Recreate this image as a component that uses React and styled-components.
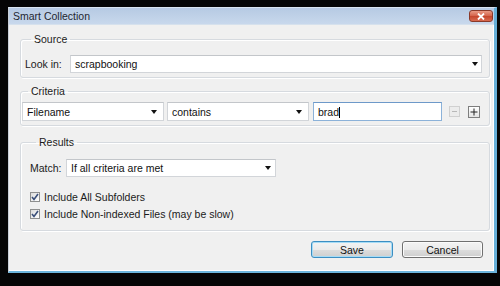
import React from 'react';
import styled, { createGlobalStyle } from 'styled-components';

const Global = createGlobalStyle`
  html, body { margin: 0; padding: 0; background: #050505; }
  body { width: 500px; height: 286px; overflow: hidden; font-family: "Liberation Sans", Arial, sans-serif; font-size: 10px; color: #1b1b1b; }
  * { box-sizing: border-box; }
`;

const Stage = styled.div`
  width: 500px;
  height: 286px;
  padding: 7px 3px 13px 8px;
  display: flex;
`;

const Window = styled.div`
  flex: 1;
  display: flex;
  flex-direction: column;
  background: #f0f0f0;
  border-left: 1px solid #c9d0d8;
  border-top: 1px solid #d9e4f0;
  border-right: 3px solid #66afd8;
  border-bottom: 2px solid #6cb5dc;
  box-shadow: inset -1px -1px 0 #ffffff;
`;

const TitleBar = styled.div`
  height: 17px;
  display: flex;
  align-items: flex-start;
  justify-content: space-between;
  padding: 0 1px 0 4px;
  background: linear-gradient(#b6cae3, #c8d8ec);
  border-bottom: 1px solid #d6e1ed;
`;

const Title = styled.span`
  line-height: 17px;
  font-size: 10.5px;
  color: #1e2630;
`;

const CloseButton = styled.div`
  margin-top: 2px;
  width: 24px;
  height: 12px;
  border-radius: 3px;
  border: 1px solid #8a3a2a;
  background: linear-gradient(#e99b85, #d4624a 50%, #c4452c 51%, #d86a50);
  display: flex;
  align-items: center;
  justify-content: center;
`;

const Body = styled.div`
  flex: 1;
  display: flex;
  flex-direction: column;
  padding: 8px 4px 0 11px;
`;

const Group = styled.fieldset`
  margin: ${p => p.$mt || 0}px 0 0 0;
  padding: ${p => p.$pad};
  border: 1px solid #d6dadf;
  border-radius: 3px;
  box-shadow: inset 1px 1px 0 #ffffff, 1px 1px 0 #ffffff;
  min-width: 0;
`;

const Legend = styled.legend`
  margin-left: 6px;
  padding: 0 3px;
  line-height: 12px;
  font-size: 10.5px;
  color: #1b1b1b;
`;

const Row = styled.div`
  display: flex;
  align-items: center;
`;

const Label = styled.span`
  width: ${p => p.$w}px;
  flex: none;
  font-size: 10.5px;
`;

const Field = styled.div`
  width: ${p => (p.$w ? `${p.$w}px` : 'auto')};
  flex: ${p => (p.$w ? 'none' : '1')};
  height: ${p => p.$h || 18}px;
  margin-left: ${p => p.$ml || 0}px;
  background: #ffffff;
  border: 1px solid ${p => (p.$focus ? '#8cb2d9' : '#d2d5d9')};
  border-top-color: ${p => (p.$focus ? '#6d99c9' : '#c3c6ca')};
  display: flex;
  align-items: center;
  padding: 0 ${p => p.$pr || 5}px 0 4px;
  font-size: 10.5px;
  color: #111;
`;

const FieldText = styled.span`
  flex: 1;
  white-space: nowrap;
`;

const Arrow = styled.span`
  width: 0;
  height: 0;
  border-left: 3px solid transparent;
  border-right: 3px solid transparent;
  border-top: 4px solid #111;
`;

const Caret = styled.span`
  display: inline-block;
  width: 1px;
  height: 11px;
  background: #000;
  vertical-align: -2px;
`;

const SquareButton = styled.div`
  width: ${p => p.$s}px;
  height: ${p => p.$s}px;
  margin-left: ${p => p.$ml}px;
  flex: none;
  border: 1px solid ${p => (p.$disabled ? '#d0d0d0' : '#7e7e7e')};
  background: ${p => (p.$disabled ? '#ececec' : 'linear-gradient(#ffffff, #e4e4e4)')};
  display: flex;
  align-items: center;
  justify-content: center;
`;

const Options = styled.div`
  display: flex;
  flex-direction: column;
  margin-top: 11px;
`;

const CheckRow = styled.label`
  display: flex;
  align-items: center;
  height: 17px;
  gap: 4px;
  font-size: 10.5px;
`;

const Box = styled.span`
  width: 10px;
  height: 10px;
  border: 1px solid #8e8f8f;
  background: linear-gradient(135deg, #dcdcdc, #ffffff);
  display: flex;
  align-items: center;
  justify-content: center;
`;

const Footer = styled.div`
  display: flex;
  justify-content: flex-end;
  gap: 9px;
  margin-top: 10px;
  padding-right: 7px;
`;

const Button = styled.div`
  width: ${p => p.$w}px;
  height: 17px;
  border-radius: 3px;
  border: 1px solid ${p => (p.$default ? '#3c8ec2' : '#707070')};
  box-shadow: inset 0 0 0 1px ${p => (p.$default ? '#a6dcf6' : '#fbfbfb')};
  background: linear-gradient(#f3f3f3 0%, #ebebeb 50%, #dddddd 51%, #cfcfcf 100%);
  display: flex;
  align-items: center;
  justify-content: center;
  font-size: 10.5px;
  color: #111;
`;

const Check = () => (
  <svg width="8" height="8" viewBox="0 0 8 8">
    <path d="M1 4 L3 6.5 L7 1" fill="none" stroke="#3a4f7a" strokeWidth="1.6" />
  </svg>
);

export default function App() {
  return (
    <>
      <Global />
      <Stage>
        <Window>
          <TitleBar>
            <Title>Smart Collection</Title>
            <CloseButton>
              <svg width="8" height="7" viewBox="0 0 8 7">
                <path d="M1 0.5 L7 6.5 M7 0.5 L1 6.5" stroke="#ffffff" strokeWidth="1.8" />
              </svg>
            </CloseButton>
          </TitleBar>
          <Body>
            <Group $pad="10px 7px 4px 4px">
              <Legend>Source</Legend>
              <Row>
                <Label $w={45}>Look in:</Label>
                <Field $pr={3}>
                  <FieldText>scrapbooking</FieldText>
                  <Arrow />
                </Field>
              </Row>
            </Group>
            <Group $mt={7} $pad="5px 9px 4px 1px">
              <Legend>Criteria</Legend>
              <Row>
                <Field $w={142} $h={19} $pr={6}>
                  <FieldText>Filename</FieldText>
                  <Arrow />
                </Field>
                <Field $w={142} $h={19} $ml={3} $pr={6}>
                  <FieldText>contains</FieldText>
                  <Arrow />
                </Field>
                <Field $w={129} $h={19} $ml={4} $focus>
                  <FieldText>brad<Caret /></FieldText>
                </Field>
                <SquareButton $s={11} $ml={7} $disabled>
                  <svg width="7" height="7" viewBox="0 0 7 7">
                    <path d="M1 3.5 H6" stroke="#b8b8b8" strokeWidth="1" />
                  </svg>
                </SquareButton>
                <SquareButton $s={12} $ml={8}>
                  <svg width="8" height="8" viewBox="0 0 8 8">
                    <path d="M0.5 4 H7.5 M4 0.5 V7.5" stroke="#222" strokeWidth="1" />
                  </svg>
                </SquareButton>
              </Row>
            </Group>
            <Group $mt={10} $pad="11px 9px 8px 9px">
              <Legend>Results</Legend>
              <Row>
                <Label $w={36}>Match:</Label>
                <Field $w={210} $pr={4}>
                  <FieldText>If all criteria are met</FieldText>
                  <Arrow />
                </Field>
              </Row>
              <Options>
                <CheckRow>
                  <Box><Check /></Box>
                  Include All Subfolders
                </CheckRow>
                <CheckRow>
                  <Box><Check /></Box>
                  Include Non-indexed Files (may be slow)
                </CheckRow>
              </Options>
            </Group>
            <Footer>
              <Button $w={82} $default>Save</Button>
              <Button $w={81}>Cancel</Button>
            </Footer>
          </Body>
        </Window>
      </Stage>
    </>
  );
}
